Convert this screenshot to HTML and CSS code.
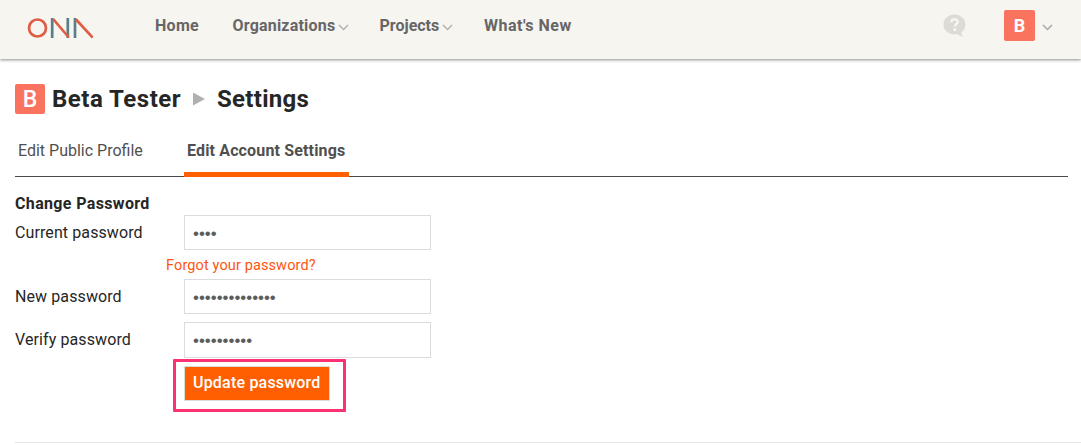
FILE: index.html
```html
<!DOCTYPE html>
<html lang="en">
<head>
<meta charset="utf-8">
<title>Settings</title>
<link rel="stylesheet" href="styles.css">
</head>
<body>
<header class="topbar">
  <svg class="logo" width="67" height="22" viewBox="0 0 67 22" fill="none" stroke-width="2.700">
    <circle cx="10.500" cy="11" r="8.500" stroke="#df5d43"/>
    <path d="M25.200 1v20M40.800 1v20M48 1v20" stroke="#5b7f89"/>
    <path d="M27 3L41 19.500M49.500 3L64.800 19.700" stroke="#df5d43" stroke-linecap="round"/>
  </svg>
  <nav class="nav">
    <a class="nav-item home">Home</a>
    <a class="nav-item orgs"><span>Organizations</span><svg class="chev" width="11" height="7" viewBox="0 0 11 7"><path d="M1 1l4.500 4.500L10 1"/></svg></a>
    <a class="nav-item projects"><span>Projects</span><svg class="chev" width="11" height="7" viewBox="0 0 11 7"><path d="M1 1l4.500 4.500L10 1"/></svg></a>
    <a class="nav-item news">What's New</a>
  </nav>
  <div class="user">
    <svg class="help" width="23" height="24" viewBox="0 0 23 24">
      <path d="M11.500.500C5.400.500.500 4.900.500 10.500S5.400 20.500 11.500 20.500c1 0 2-.1 2.900-.4 1.400 1.500 3.400 2.500 6.100 2.400-1.400-1-2.100-2.300-2.100-4.100 2.500-1.800 4.100-4.700 4.100-7.900C22.500 4.900 17.600.500 11.500.500z" fill="#dcdbd6"/>
      <path d="M8.400 8.200c.1-2 1.400-3 3.200-3s3.100 1 3.100 2.700c0 2.200-2.800 2.300-2.800 4.700" fill="none" stroke="#f7f5f0" stroke-width="2.600"/>
      <circle cx="11.800" cy="15.700" r="1.600" fill="#f7f5f0"/>
    </svg>
    <span class="avatar">B</span>
    <svg class="chev user-chev" width="11" height="7" viewBox="0 0 11 7"><path d="M1 1l4.500 4.500L10 1"/></svg>
  </div>
</header>
<main class="page">
  <h1 class="title">
    <span class="badge">B</span><span class="name">Beta Tester</span>
    <svg class="sep" width="12" height="14" viewBox="0 0 12 14"><path d="M0 .500L12 7L0 13.500z" fill="#b0b0b0"/></svg>
    <span class="section">Settings</span>
  </h1>
  <div class="tabs">
    <a class="tab">Edit Public Profile</a>
    <a class="tab active">Edit Account Settings</a>
  </div>
  <form class="form">
    <h2 class="subtitle">Change Password</h2>
    <div class="row"><label>Current password</label><input type="password" value="demo"></div>
    <a class="forgot">Forgot your password?</a>
    <div class="row"><label>New password</label><input type="password" value="demodemodemo12"></div>
    <div class="row verify"><label>Verify password</label><input type="password" value="demodemo12"></div>
    <div class="highlight"><button type="button">Update password</button></div>
  </form>
</main>
<div class="rule"></div>
</body>
</html>
```
FILE: styles.css
```css
* { box-sizing: border-box; }
body {
  margin: 0;
  height: 445px;
  overflow: hidden;
  background: #fff;
  color: #262626;
  font: 16px/20px Roboto, "Liberation Sans", sans-serif;
}
.topbar {
  display: flex;
  height: 59px;
  padding-left: 27px;
  background: #f7f5f0;
  box-shadow: 0 1px 3px rgba(0, 0, 0, .45);
}
.logo { margin-top: 17px; flex: none; }
.nav { display: flex; margin-left: 61px; padding-top: 16px; }
.nav-item {
  display: flex;
  color: #666;
  font-weight: 700;
  white-space: nowrap;
}
.home { width: 77.500px; letter-spacing: .3px; }
.orgs { width: 147px; letter-spacing: .2px; }
.projects { width: 104.500px; }
.news { letter-spacing: .5px; }
.chev {
  flex: none;
  margin: 8px 0 0 3px;
  fill: none;
  stroke: #b3b2ae;
  stroke-width: 1.500;
}
.user { display: flex; margin-left: auto; padding-right: 28px; }
.help { margin: 14px 38px 0 0; }
.avatar {
  width: 31px;
  height: 31px;
  margin-top: 10px;
  border-radius: 2px;
  background: #fa735f;
  color: #fff;
  font-weight: 700;
  font-size: 18px;
  line-height: 32px;
  text-align: center;
}
.user-chev { margin: 24px 0 0 7px; stroke: #aaa9a5; }
.page { padding: 25px 13px 0 15px; }
.title {
  display: flex;
  margin: 0;
  height: 30px;
  font-size: 24px;
  line-height: 31px;
  font-weight: 700;
}
.badge {
  width: 30px;
  height: 30px;
  margin-right: 7px;
  border-radius: 2px;
  background: #fa735f;
  color: #fff;
  font-size: 23px;
  font-weight: 500;
  text-align: center;
}
.name { width: 141px; letter-spacing: .5px; white-space: nowrap; }
.sep { margin: 8px 12px 0 0; }
.section { letter-spacing: .3px; }
.tabs {
  display: flex;
  height: 63px;
  border-bottom: 1px solid #4a4a4a;
}
.tab {
  width: 169px;
  height: 63px;
  padding: 27px 0 0 3px;
  color: #505050;
  white-space: nowrap;
}
.tab.active {
  width: 165px;
  border-bottom: 5px solid #ff5f00;
  font-weight: 700;
  letter-spacing: .15px;
}
.form { padding-top: 17px; }
.subtitle { margin: 0; height: 21px; font-size: 16px; line-height: 20px; letter-spacing: .35px; }
.row { display: flex; height: 35px; }
.row label { width: 169px; line-height: 35px; letter-spacing: .1px; white-space: nowrap; }
.row input {
  width: 247px;
  height: 35px;
  padding: 2px 8px 0;
  border: 1px solid #dcdcdc;
  background: #fff;
  color: #5c5c5c;
  font: 16.900px "Liberation Sans", sans-serif;
}
.forgot {
  display: block;
  height: 29px;
  margin-left: 151px;
  color: #ff5510;
  font-size: 14.500px;
  line-height: 31px;
  letter-spacing: .12px;
}
.verify, .verify input { height: 36px; }
.verify { margin-top: 8px; }
.highlight {
  width: 173px;
  height: 53px;
  margin: 1px 0 0 158px;
  padding: 4px 0 0 8px;
  border: 3px solid #fa3272;
  border-radius: 1px;
}
.highlight button {
  display: block;
  width: 146px;
  height: 35px;
  padding: 0 0 2px 8px;
  border: 1px solid #dcdcdc;
  background: #ff5f00;
  color: #fff;
  font: 500 16px/20px Roboto, sans-serif;
  letter-spacing: .2px;
  text-align: left;
  white-space: nowrap;
}
.rule { height: 1px; margin: 30px 0 0 15px; background: #e4e4e4; }
```
